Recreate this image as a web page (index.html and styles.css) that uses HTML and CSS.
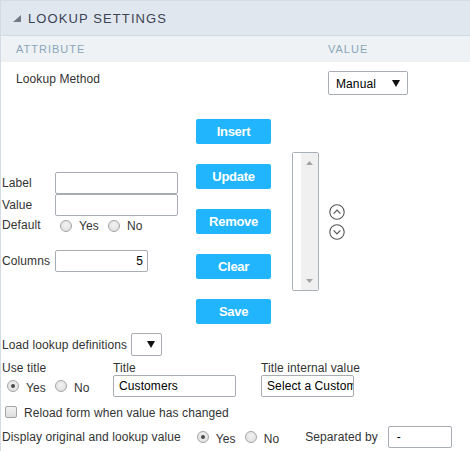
FILE: index.html
```html
<!DOCTYPE html>
<html>
<head>
<meta charset="utf-8">
<link rel="stylesheet" href="styles.css">
</head>
<body>
<div class="panel">
  <div class="header"><span class="tri"></span><span class="title">LOOKUP SETTINGS</span></div>
  <div class="subhead"><span class="col-attr">ATTRIBUTE</span><span>VALUE</span></div>
  <div class="method-row">
    <span class="method-label">Lookup Method</span>
    <div class="select select-method"><span>Manual</span><svg width="8" height="7" viewBox="0 0 8 7"><path d="M0 0H8L4 7Z" fill="#111"/></svg></div>
  </div>

  <div class="middle">
    <div class="fields">
      <div class="frow"><span class="flabel">Label</span><div class="input w123"></div></div>
      <div class="frow"><span class="flabel">Value</span><div class="input w123"></div></div>
      <div class="frow default-row"><span class="flabel">Default</span>
        <span class="radio r-default"></span><span class="rtext">Yes</span>
        <span class="radio r-no"></span><span class="rtext">No</span>
      </div>
      <div class="frow"><span class="flabel">Columns</span><div class="input w93 right">5</div></div>
    </div>
    <div class="buttons">
      <div class="btn">Insert</div>
      <div class="btn">Update</div>
      <div class="btn">Remove</div>
      <div class="btn">Clear</div>
      <div class="btn">Save</div>
    </div>
    <div class="listbox">
      <div class="lb-inner"></div>
      <div class="lb-track">
        <svg width="7" height="4" viewBox="0 0 7 4"><path d="M0 4L3.5 0L7 4Z" fill="#a3a3a3"/></svg>
        <svg width="7" height="4" viewBox="0 0 7 4"><path d="M0 0L3.5 4L7 0Z" fill="#a3a3a3"/></svg>
      </div>
    </div>
    <div class="arrows">
      <svg width="16" height="16" viewBox="0 0 16 16"><circle cx="8" cy="8" r="7.2" fill="none" stroke="#555" stroke-width="1.1"/><path d="M4.6 9.6L8 6.2L11.4 9.6" fill="none" stroke="#555" stroke-width="1.2"/></svg>
      <svg width="16" height="16" viewBox="0 0 16 16"><circle cx="8" cy="8" r="7.2" fill="none" stroke="#555" stroke-width="1.1"/><path d="M4.6 6.4L8 9.8L11.4 6.4" fill="none" stroke="#555" stroke-width="1.2"/></svg>
    </div>
  </div>

  <div class="load-row">
    <span>Load lookup definitions</span>
    <div class="select select-small"><svg width="8" height="7" viewBox="0 0 8 7"><path d="M0 0H8L4 7Z" fill="#111"/></svg></div>
  </div>

  <div class="title-grid">
    <div class="tcol c1">
      <span class="tlabel">Use title</span>
      <div class="radios">
        <span class="radio checked r-first"></span><span class="rtext">Yes</span>
        <span class="radio r-no2"></span><span class="rtext">No</span>
      </div>
    </div>
    <div class="tcol c2">
      <span class="tlabel">Title</span>
      <div class="input w123 val">Customers</div>
    </div>
    <div class="tcol">
      <span class="tlabel">Title internal value</span>
      <div class="input w93 val clip">Select a Custome</div>
    </div>
  </div>

  <div class="check-row"><span class="checkbox"></span><span class="ctext">Reload form when value has changed</span></div>

  <div class="display-row">
    <span>Display original and lookup value</span>
    <span class="radio checked r-disp"></span><span class="rtext">Yes</span>
    <span class="radio r-no3"></span><span class="rtext">No</span>
    <span class="sep">Separated by</span>
    <div class="input w64 sep-input val">-</div>
  </div>
</div>
</body>
</html>
```

FILE: styles.css
```css
* { box-sizing: border-box; }
html, body { margin: 0; padding: 0; background: #fff; }
body {
  font-family: "Liberation Sans", Arial, sans-serif;
  font-size: 12px;
  letter-spacing: 0.1px;
  color: #333;
  width: 470px;
  height: 451px;
  overflow: hidden;
}
.panel {
  border-left: 1px solid #d3dce4;
  height: 451px;
}
.header {
  height: 36px;
  background: #e1e7ee;
  border-top: 1px solid #d4dce4;
  border-bottom: 1px solid #d2dae2;
  display: flex;
  align-items: center;
  padding-left: 12px;
}
.tri {
  width: 0;
  height: 0;
  border-left: 8px solid transparent;
  border-bottom: 7px solid #727a86;
  margin-right: 7px;
  margin-top: 1px;
}
.title {
  font-size: 13px;
  letter-spacing: 1.1px;
  color: #3b4354;
}
.subhead {
  height: 26px;
  background: #eef2f5;
  display: flex;
  align-items: center;
  padding-left: 15px;
  font-size: 11px;
  letter-spacing: 1px;
  color: #8ba5b9;
}
.col-attr { width: 312px; }
.method-row {
  display: flex;
  align-items: flex-start;
  padding-top: 9px;
  padding-left: 15px;
}
.method-label {
  width: 312px;
  line-height: 14px;
  margin-top: 1px;
}
.select {
  border: 1px solid #a8adb4;
  border-radius: 2px;
  background: #fff;
  display: flex;
  align-items: center;
  color: #000;
}
.select-method {
  width: 80px;
  height: 24px;
  justify-content: space-between;
  padding: 1px 7px 0 7px;
}
.select-small {
  width: 31px;
  height: 23px;
  justify-content: flex-end;
  padding-right: 6px;
  margin-left: 4px;
}
.middle {
  display: flex;
  align-items: center;
  margin-top: 24px;
}
.fields {
  margin-left: 1px;
  width: 176px;
  display: flex;
  flex-direction: column;
}
.frow {
  display: flex;
  align-items: center;
}
.flabel { width: 53px; }
.input {
  height: 22px;
  border: 1px solid #a8adb4;
  border-radius: 2px;
  background: #fff;
  display: flex;
  align-items: center;
  color: #000;
}
.w123 { width: 123px; }
.w93 { width: 93px; }
.w64 { width: 64px; }
.right { justify-content: flex-end; padding-right: 4px; }
.val { padding-left: 5px; }
.clip { overflow: hidden; white-space: nowrap; }
.default-row {
  height: 18px;
  margin-bottom: 16px;
}
.radio {
  width: 12px;
  height: 12px;
  border-radius: 50%;
  border: 1px solid #a4a4a4;
  background: radial-gradient(circle at 50% 40%, #f2f2f2 0, #dcdcdc 100%);
  display: inline-block;
  flex: none;
  position: relative;
}
.radio.checked::after {
  content: "";
  position: absolute;
  left: 3px;
  top: 3px;
  width: 4px;
  height: 4px;
  border-radius: 50%;
  background: #4a4a4a;
}
.rtext { margin-left: 7px; margin-top: 3px; }
.r-default { margin-left: 5px; margin-top: 2px; }
.r-no { margin-left: 9px; margin-top: 2px; }
.buttons {
  margin-left: 18px;
  display: flex;
  flex-direction: column;
  gap: 20px;
}
.btn {
  width: 75px;
  height: 25px;
  background: #21b5fd;
  border-radius: 2px;
  color: #fff;
  font-weight: bold;
  font-size: 13px;
  letter-spacing: -0.3px;
  display: flex;
  align-items: center;
  justify-content: center;
}
.listbox {
  margin-left: 21px;
  width: 27px;
  height: 139px;
  border: 1px solid #a9afb7;
  border-radius: 2px;
  display: flex;
}
.lb-inner { width: 8px; background: #fff; }
.lb-track {
  flex: 1;
  background: #f0f0f0;
  display: flex;
  flex-direction: column;
  justify-content: space-between;
  align-items: center;
  padding: 8px 0 7px 0;
}
.arrows {
  margin-left: 10px;
  display: flex;
  flex-direction: column;
  gap: 4px;
}
.arrows svg { display: block; }
.load-row {
  margin-top: 9px;
  margin-left: 1px;
  height: 23px;
  display: flex;
  align-items: center;
}
.title-grid {
  margin-top: 5px;
  margin-left: 1px;
  display: flex;
}
.tcol { display: flex; flex-direction: column; }
.c1 { width: 111px; }
.c2 { width: 148px; }
.tlabel { line-height: 14px; height: 14px; }
.radios {
  height: 22px;
  display: flex;
  align-items: center;
}
.r-first { margin-left: 5px; }
.r-no2 { margin-left: 9px; }
.check-row {
  margin-top: 6px;
  height: 18px;
  display: flex;
  align-items: center;
}
.checkbox {
  width: 12px;
  height: 12px;
  margin-left: 4px;
  border: 1px solid #a4a4a4;
  border-radius: 2px;
  background: linear-gradient(#f3f3f3, #dedede);
}
.ctext { margin-left: 7px; margin-top: 2px; }
.display-row {
  margin-top: 5px;
  margin-left: 1px;
  height: 22px;
  display: flex;
  align-items: center;
}
.r-disp { margin-left: 16px; }
.r-no3 { margin-left: 9px; }
.sep { margin-left: 26px; }
.sep-input { margin-left: 10px; padding-left: 8px; }
```
